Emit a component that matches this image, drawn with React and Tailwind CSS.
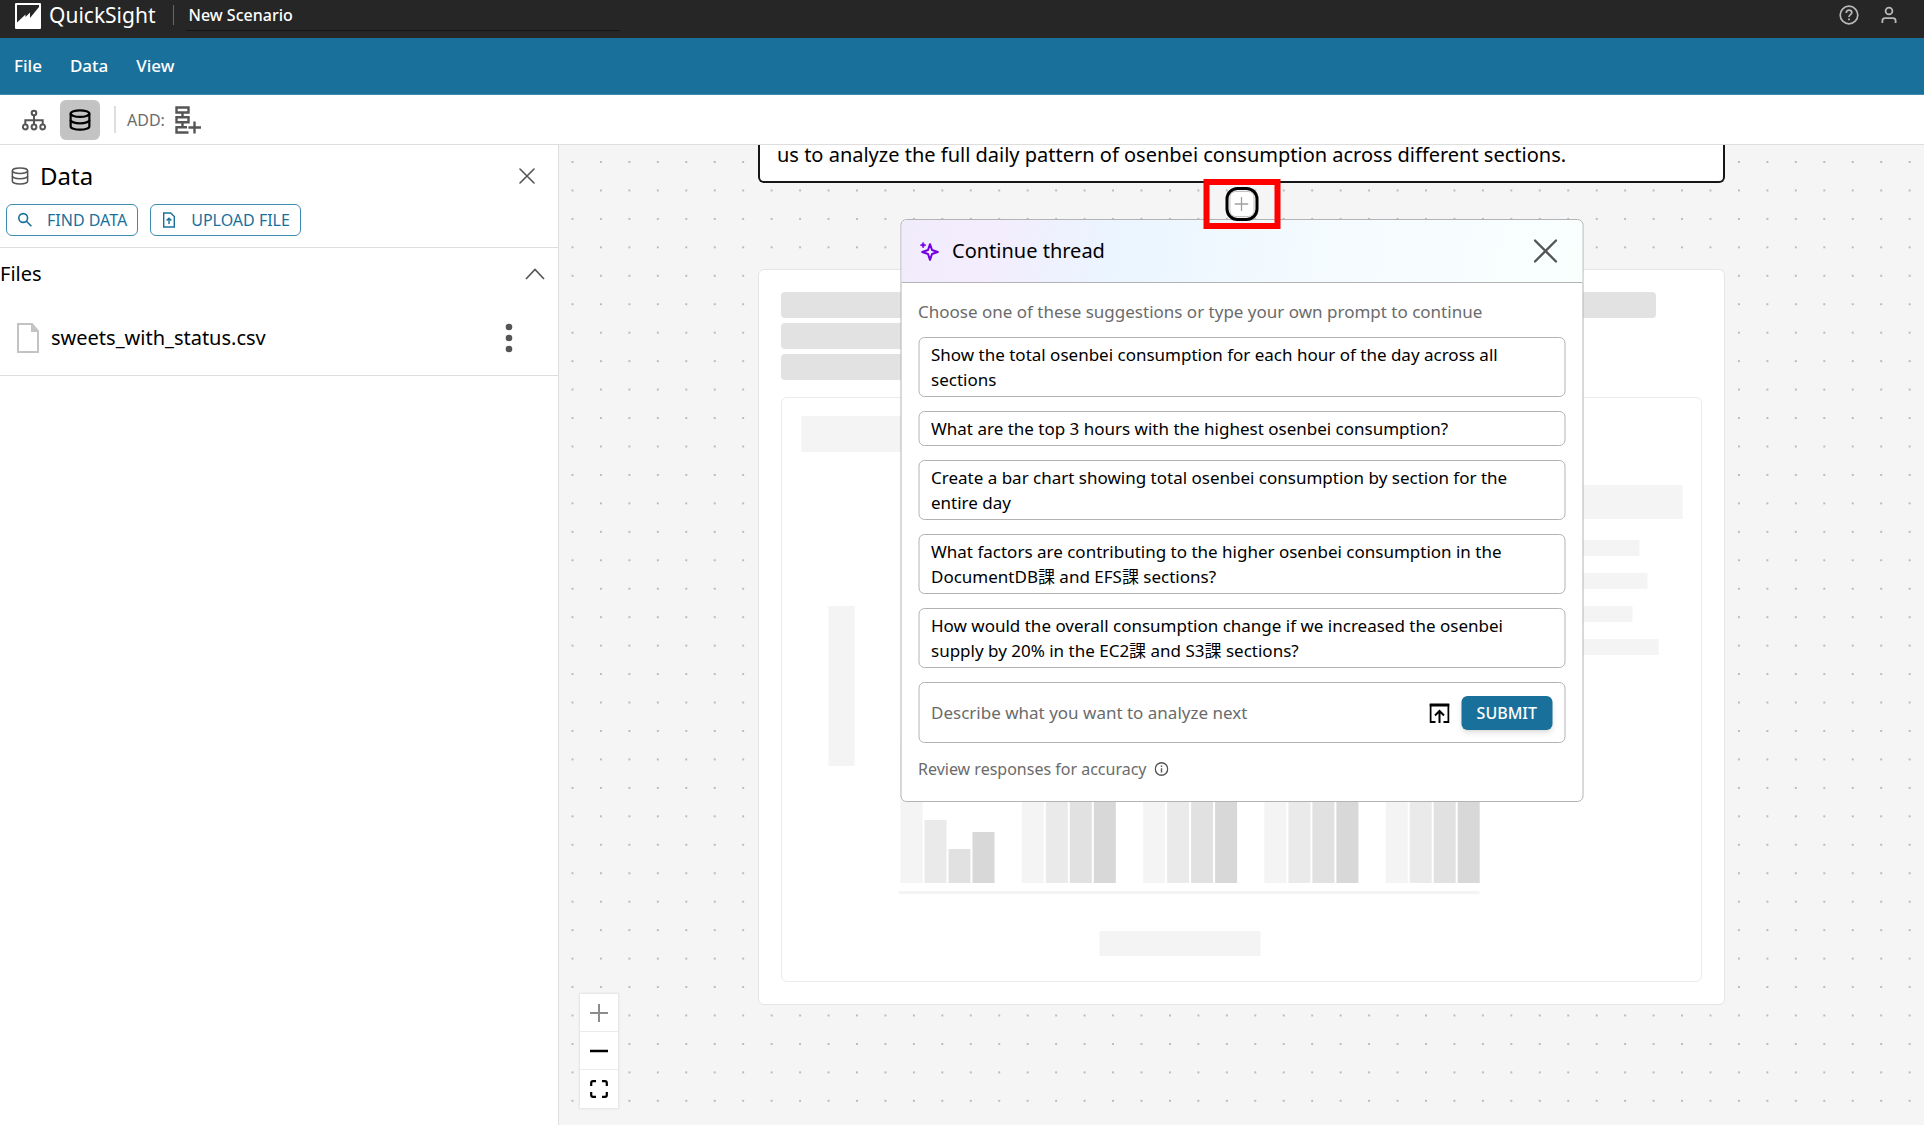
import React from 'react';

const MENU_ITEMS = ['File', 'Data', 'View'];

const SUGGESTIONS = [
  'Show the total osenbei consumption for each hour of the day across all sections',
  'What are the top 3 hours with the highest osenbei consumption?',
  'Create a bar chart showing total osenbei consumption by section for the entire day',
  'What factors are contributing to the higher osenbei consumption in the DocumentDB課 and EFS課 sections?',
  'How would the overall consumption change if we increased the osenbei supply by 20% in the EC2課 and S3課 sections?',
];

const DatabaseIcon = ({ className, strokeWidth = 2 }) => (
  <svg className={className} viewBox="0 0 24 24" fill="none" stroke="currentColor" strokeWidth={strokeWidth}>
    <ellipse cx="12" cy="5" rx="10.2" ry="3.6" />
    <path d="M1.8 5v14c0 2 4.6 3.600 10.200 3.600s10.200-1.600 10.200-3.600V5" />
    <path d="M1.8 12c0 2 4.600 3.600 10.200 3.600s10.200-1.600 10.200-3.600" />
  </svg>
);

const CloseIcon = ({ className }) => (
  <svg className={className} viewBox="0 0 24 24" fill="none" stroke="currentColor" strokeWidth="2.4" strokeLinecap="round">
    <path d="M1.5 1.5l21 21M22.5 1.5l-21 21" />
  </svg>
);

const TopBar = () => (
  <header className="flex h-[38px] items-start bg-[#262626] px-[15px] pt-[3px] text-white">
    <svg className="h-[26px] w-[26px]" viewBox="0 0 26 26" aria-hidden="true">
      <rect width="26" height="26" rx="1" fill="#fff" />
      <path d="M2 2h22v2L15 15V9.500L10.500 14v-2.500L2 19.500z" fill="#262626" />
    </svg>
    <span className="ml-2 text-[21px] leading-[25px]">QuickSight</span>
    <span className="mt-0.5 ml-[17px] h-5 w-px bg-[#666]" />
    <div className="ml-3 h-7 w-[434px] border-b border-[#151515] pl-[3px] text-base leading-[25px] font-medium">
      New Scenario
    </div>
    <div className="mr-2.5 ml-auto flex gap-5 pt-0.5 text-[#b8b8b8]">
      <button aria-label="Help">
        <svg className="h-5 w-5" viewBox="0 0 20 20" fill="none" stroke="currentColor" strokeWidth="1.7">
          <circle cx="10" cy="10" r="8.8" />
          <path d="M7.2 8c0-1.7 1.2-2.8 2.8-2.8s2.8 1 2.8 2.5c0 1.9-2.8 2-2.8 4.2M10 13.4v1.8" />
        </svg>
      </button>
      <button aria-label="Account">
        <svg className="h-5 w-5" viewBox="0 0 20 20" fill="none" stroke="currentColor" strokeWidth="1.8">
          <circle cx="10" cy="6" r="3.4" />
          <path d="M3.4 18v-2.2c0-1.6 1-2.6 2.6-2.6h8c1.6 0 2.6 1 2.6 2.6V18" />
        </svg>
      </button>
    </div>
  </header>
);

const MenuBar = () => (
  <nav className="flex h-[57px] items-center gap-7 border-b border-[#3d8bb0] bg-[#19719b] px-[14px] text-white">
    {MENU_ITEMS.map((item) => (
      <button key={item} className="text-[17px] leading-6 font-medium">
        {item}
      </button>
    ))}
  </nav>
);

const ToolBar = () => (
  <div className="flex h-[50px] items-center border-b border-[#dedede] bg-white pl-[22px] text-[#555]">
    <button aria-label="Outline">
      <svg className="h-6 w-6" viewBox="0 0 24 24" fill="none" stroke="currentColor" strokeWidth="2">
        <circle cx="12" cy="5" r="2.3" />
        <circle cx="3.3" cy="19" r="2.4" />
        <circle cx="12" cy="19" r="2.4" />
        <circle cx="20.7" cy="19" r="2.4" />
        <path d="M12 7.3v9.3M3.3 16.6v-4.4h17.4v4.4" />
      </svg>
    </button>
    <button aria-label="Data panel" className="ml-[14px] flex h-10 w-10 items-center justify-center rounded-md bg-[#c3c3c3] text-black">
      <DatabaseIcon className="h-6 w-[22px]" strokeWidth={2.4} />
    </button>
    <span className="ml-[14px] h-[27px] w-0.5 bg-[#dedede]" />
    <span className="ml-[11px] text-base text-[#6b6b6b]">ADD:</span>
    <button aria-label="Add block" className="ml-2.5">
      <svg className="h-7 w-[26px]" viewBox="0 0 26 28" fill="none" stroke="currentColor" strokeWidth="2.4">
        <path d="M1.500 1.500h12v5h-12zM1.500 11.200h12v5h-12zM7.500 6.500v4.700M7.500 16.200v5M12 21.200H1.500v5.300h12M19.500 15.500v12M13.500 21.500H26" />
      </svg>
    </button>
  </div>
);

const DataPanel = () => (
  <aside className="flex w-[559px] shrink-0 flex-col border-r border-[#dedede] bg-white text-black">
    <div className="border-b border-[#dedede] pb-[11px]">
      <div className="flex items-center pt-[13px] pr-[23px] pl-[11px]">
        <DatabaseIcon className="h-5 w-[18px] text-[#555]" />
        <h2 className="ml-[11px] text-2xl leading-9">Data</h2>
        <button aria-label="Close panel" className="ml-auto text-[#555]">
          <CloseIcon className="h-4 w-4" />
        </button>
      </div>
      <div className="mt-2.5 flex gap-3 pl-1.5 text-[#19719b]">
        <button className="flex h-8 items-center gap-3.5 rounded-md border border-[#3d8bb0] px-2.5 text-base">
          <svg className="h-4 w-4" viewBox="0 0 16 16" fill="none" stroke="currentColor" strokeWidth="1.6">
            <circle cx="6.200" cy="6" r="4.400" />
            <path d="M9.400 9.200l5 5" />
          </svg>
          FIND DATA
        </button>
        <button className="flex h-8 items-center gap-3.5 rounded-md border border-[#3d8bb0] px-2.5 text-base">
          <svg className="h-4 w-4" viewBox="0 0 16 16" fill="none" stroke="currentColor" strokeWidth="1.4">
            <path d="M2.700 1h7l3.600 3.500V15H2.700zM8 12V6.500M5.600 8.600L8 6.200l2.400 2.400" />
          </svg>
          UPLOAD FILE
        </button>
      </div>
    </div>
    <div className="border-b border-[#dedede]">
      <div className="flex h-[52px] items-center justify-between pr-[13px]">
        <h3 className="text-xl">Files</h3>
        <button aria-label="Collapse files" className="text-[#555]">
          <svg className="h-3 w-5" viewBox="0 0 20 12" fill="none" stroke="currentColor" strokeWidth="1.700">
            <path d="M1 11l9-9.500 9 9.500" />
          </svg>
        </button>
      </div>
      <div className="flex h-[75px] items-center pr-[45px] pl-[17px]">
        <svg className="h-[30px] w-[22px]" viewBox="0 0 22 30" fill="none" aria-hidden="true">
          <path d="M1 1h14l6 7v21H1z" stroke="#c3c3c3" strokeWidth="2" />
          <path d="M14 1v8h7z" fill="#c3c3c3" />
        </svg>
        <span className="ml-3 text-xl">sweets_with_status.csv</span>
        <button aria-label="File options" className="ml-auto text-[#555]">
          <svg className="h-[30px] w-2" viewBox="0 0 8 30" fill="currentColor">
            <circle cx="4" cy="4" r="3.300" />
            <circle cx="4" cy="15" r="3.300" />
            <circle cx="4" cy="26" r="3.300" />
          </svg>
        </button>
      </div>
    </div>
  </aside>
);

const DotGrid = () => (
  <svg className="absolute inset-0 h-full w-full" aria-hidden="true">
    <pattern id="dots" x="12.500" y="16" width="28.45" height="28.45" patternUnits="userSpaceOnUse">
      <circle cx="1" cy="1" r="1" fill="#a8a8a8" />
    </pattern>
    <rect width="100%" height="100%" fill="url(#dots)" />
  </svg>
);

const ChartPlaceholder = () => {
  const groups = [0, 1, 2, 3, 4];
  const fills = ['#f4f4f4', '#eaeaea', '#e1e1e1', '#d8d8d8'];
  const firstTops = [340, 422, 451, 434];

  return (
    <svg className="block h-[583px] w-full" viewBox="0 0 918 583" aria-hidden="true">
      <g fill="#f4f4f4">
        <rect x="19" y="18" width="160" height="36" />
        <rect x="46" y="208" width="26" height="160" />
        <rect x="740" y="87" width="160" height="34" />
        <rect x="740" y="142" width="117" height="16" />
        <rect x="740" y="175" width="125" height="16" />
        <rect x="740" y="208" width="110" height="16" />
        <rect x="740" y="241" width="136" height="16" />
        <rect x="116" y="493" width="581" height="3" />
        <rect x="317" y="533" width="161" height="25" />
      </g>
      {groups.map((group) =>
        fills.map((fill, i) => {
          const top = group === 0 ? firstTops[i] : 340;
          return (
            <rect key={`${group}-${i}`} x={118 + group * 121.3 + i * 24} y={top} width="22" height={485 - top} fill={fill} />
          );
        })
      )}
    </svg>
  );
};

const LoadingCard = () => (
  <div className="mt-[86px] rounded-md border border-[#e5e5e5] bg-white px-[22px] pt-[22px] pb-[22px]">
    <div className="flex flex-col gap-[5px]">
      <div className="h-[26px] w-[875px] rounded bg-[#e2e2e2]" />
      <div className="h-[26px] w-[700px] rounded bg-[#e2e2e2]" />
      <div className="h-[26px] w-[760px] rounded bg-[#e2e2e2]" />
    </div>
    <div className="mt-[17px] rounded-md border border-[#ebebeb]">
      <ChartPlaceholder />
    </div>
  </div>
);

const ContinueThread = () => (
  <section className="absolute top-[74px] left-1/2 w-[683px] -translate-x-1/2 rounded-md border border-[#b3b3b3] bg-white">
    <div className="flex h-[63px] items-center rounded-t-md border-b border-[#b3b3b3] bg-[linear-gradient(100deg,#f1ecfb_0%,#f3edfe_14%,#eaf5ff_32%,#f4fbff_60%,#fafffe_100%)] pr-[25px] pl-[18px]">
      <svg className="h-5 w-5" viewBox="0 0 20 20" aria-hidden="true">
        <path d="M10.500 3.200l2 5.800 5.800 2-5.800 2-2 5.800-2-5.800-5.800-2 5.800-2z" fill="none" stroke="#7300e5" strokeWidth="2" strokeLinejoin="round" />
        <path d="M3.600 1.200l.9 2 2 .9-2 .9-.9 2-.9-2-2-.9 2-.9z" fill="#7300e5" stroke="#7300e5" strokeWidth="0.600" />
      </svg>
      <h2 className="ml-[13px] text-xl">Continue thread</h2>
      <button aria-label="Close" className="ml-auto text-[#555]">
        <CloseIcon className="h-6 w-6" />
      </button>
    </div>
    <div className="px-[17px] pt-[17px] pb-5">
      <p className="text-[17px] leading-6 text-[#6b6b6b]">Choose one of these suggestions or type your own prompt to continue</p>
      <div className="mt-[13px] flex flex-col gap-3.5">
        {SUGGESTIONS.map((text) => (
          <button key={text} className="rounded-md border border-[#b3b3b3] px-3 py-1 text-left text-[17px] leading-[25px]">
            {text}
          </button>
        ))}
      </div>
      <form className="mt-3.5 flex h-[61px] items-center rounded-md border border-[#b3b3b3] px-3" onSubmit={(e) => e.preventDefault()}>
        <input
          type="text"
          aria-label="Prompt"
          placeholder="Describe what you want to analyze next"
          className="min-w-0 flex-1 text-[17px] leading-6 outline-none placeholder:text-[#6b6b6b]"
        />
        <button type="button" aria-label="Expand prompt">
          <svg className="h-5 w-5" viewBox="0 0 20 20" fill="none" stroke="currentColor" strokeWidth="2">
            <path d="M6 19H1V2h18v17h-5" />
            <path d="M0 2h20" strokeWidth="3" />
            <path d="M10 20V8.500M5.500 12.500L10 8l4.500 4.500" />
          </svg>
        </button>
        <button type="submit" className="ml-3 h-[34px] rounded-md bg-[#19719b] px-[15px] text-base font-medium text-white shadow-md">
          SUBMIT
        </button>
      </form>
      <p className="mt-3.5 flex items-center gap-2 text-base text-[#6b6b6b]">
        Review responses for accuracy
        <svg className="h-3.5 w-3.5" viewBox="0 0 14 14" fill="none" stroke="#555" strokeWidth="1.400">
          <circle cx="7" cy="7" r="6.200" />
          <path d="M7 6.200v4.300M7 3.500v1.500" />
        </svg>
      </p>
    </div>
  </section>
);

// Add-step button between two blocks, with its highlight frame
const AddStep = () => (
  <div className="absolute top-[34px] left-1/2 flex h-[50px] w-[77px] -translate-x-1/2 items-center justify-center border-[6px] border-[#ff0000]">
    <button aria-label="Add step" className="flex h-[34px] w-[33px] items-center justify-center rounded-xl border-[3px] border-black bg-[#f5f5f5]">
      <span className="flex h-[26px] w-[25px] items-center justify-center rounded-md border border-[#c3c3c3] bg-white">
        <svg className="h-3.5 w-3.5" viewBox="0 0 14 14" fill="none" stroke="#a0a0a0" strokeWidth="1.300">
          <path d="M7 0v14M0 7h14" />
        </svg>
      </span>
    </button>
  </div>
);

const ZoomControls = () => (
  <div className="absolute bottom-[17px] left-[21px] flex w-[38px] flex-col divide-y divide-[#ebebeb] bg-white shadow-[0_0_2px_1px_rgba(0,0,0,0.08)]">
    <button aria-label="Zoom in" className="flex h-[38px] items-center justify-center text-[#8c8c8c]">
      <svg className="h-[18px] w-[18px]" viewBox="0 0 18 18" stroke="currentColor" strokeWidth="2">
        <path d="M9 0v18M0 9h18" />
      </svg>
    </button>
    <button aria-label="Zoom out" className="flex h-[38px] items-center justify-center">
      <svg className="h-[18px] w-[18px]" viewBox="0 0 18 18" stroke="#000" strokeWidth="2.500">
        <path d="M0 9h18" />
      </svg>
    </button>
    <button aria-label="Fit view" className="flex h-[38px] items-center justify-center">
      <svg className="h-[18px] w-[18px]" viewBox="0 0 18 18" fill="none" stroke="#000" strokeWidth="2.200">
        <path d="M1.200 6V3c0-1 .8-1.800 1.800-1.800h3M12 1.200h3c1 0 1.800.8 1.800 1.800v3M16.800 12v3c0 1-.8 1.800-1.800 1.800h-3M6 16.800H3c-1 0-1.800-.8-1.800-1.800v-3" />
      </svg>
    </button>
  </div>
);

const Canvas = () => (
  <main className="relative flex-1 bg-[#f5f5f5] text-black">
    <DotGrid />
    <div className="relative mx-auto w-[967px]">
      <div className="rounded-b-md border-2 border-t-0 border-[#161616] bg-white px-[17px] pb-4 text-xl leading-5">
        us to analyze the full daily pattern of osenbei consumption across different sections.
      </div>
      <LoadingCard />
      <ContinueThread />
      <AddStep />
    </div>
    <ZoomControls />
  </main>
);

const App = () => (
  <div className="flex min-h-screen flex-col bg-white font-['Noto_Sans','Noto_Sans_CJK_JP',sans-serif]">
    <TopBar />
    <MenuBar />
    <ToolBar />
    <div className="flex flex-1">
      <DataPanel />
      <Canvas />
    </div>
  </div>
);

export default App;
